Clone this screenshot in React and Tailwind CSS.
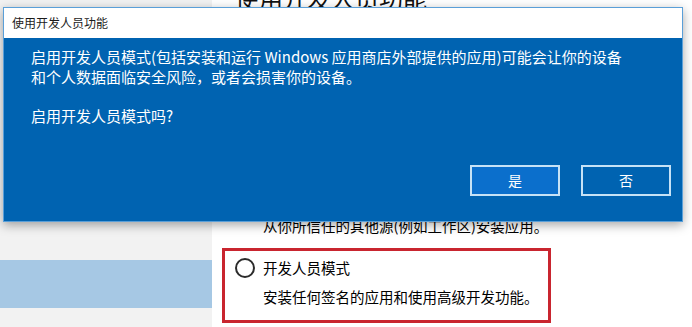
import React from "react";

const font = { fontFamily: '"Noto Sans CJK SC", "Noto Sans", sans-serif' };

function Radio() {
  return (
    <span className="w-[20px] h-[20px] rounded-full border-2 border-[#2b2b2b] shrink-0" />
  );
}

function Option({ label, desc, className = "" }) {
  return (
    <div className={className}>
      <div className="flex items-center gap-[8px] h-[20px]">
        <Radio />
        <span className="text-[14.5px] leading-[20px]">{label}</span>
      </div>
      <p className="mt-[9px] pl-[28px] text-[14.5px] leading-[20px]">{desc}</p>
    </div>
  );
}

function DevDialog() {
  return (
    <div className="absolute left-[3px] top-[7px] w-[680px] h-[215px] flex flex-col border border-[#5a9fd8] shadow-[0_3px_10px_rgba(0,0,0,0.35)]">
      <div className="h-[30px] bg-white flex items-center pl-[8px] text-[12px] text-[#1b1b1b]">
        使用开发人员功能
      </div>
      <div className="flex-1 bg-[#0063b1] text-white flex flex-col pl-[27px] pr-[11px] pt-[9px] pb-[25px]">
        <p className="text-[15px] leading-[20px]">
          启用开发人员模式(包括安装和运行 Windows 应用商店外部提供的应用)可能会让你的设备
          <br />
          和个人数据面临安全风险，或者会损害你的设备。
        </p>
        <p className="mt-[19px] text-[15px] leading-[20px]">启用开发人员模式吗?</p>
        <div className="mt-auto flex justify-end gap-[21px]">
          <button className="w-[90px] h-[31px] border-2 border-[#c6e2f6] bg-[#0b6fcc] text-[14px] text-white">
            是
          </button>
          <button className="w-[90px] h-[31px] border-2 border-[#c6e2f6] bg-[#0063b1] text-[14px] text-white">
            否
          </button>
        </div>
      </div>
    </div>
  );
}

export default function App() {
  return (
    <div className="relative w-[692px] h-[327px] overflow-hidden bg-white flex text-black" style={font}>
      {/* settings nav */}
      <aside className="w-[212px] bg-[#f2f2f2] flex flex-col">
        <div className="h-[260px]" />
        <div className="h-[48px] bg-[#a6c8e4]" />
      </aside>

      {/* settings page */}
      <main className="flex-1 pl-[23px] flex flex-col">
        <h1 className="-mt-[18px] text-[24px] leading-[32px] text-[#111]">使用开发人员功能</h1>
        <p className="mt-[4px] text-[14.5px] leading-[20px]">这些设置仅用于开发目的。</p>
        <p className="text-[14.5px] leading-[20px] text-[#0063b1]">了解详细信息</p>
        <Option
          className="mt-[51px]"
          label="Microsoft Store 应用"
          desc="仅安装来自 Microsoft Store 的应用。"
        />
        <Option
          className="mt-[29px]"
          label="旁加载应用"
          desc="从你所信任的其他源(例如工作区)安装应用。"
        />
        <div className="mt-[12px] -ml-[13px] w-[329px] border-[3px] border-[#c9252f] pl-[10px] pt-[7px] pb-[13px]">
          <div className="flex items-center gap-[8px] h-[20px]">
            <Radio />
            <span className="text-[14.5px] leading-[20px]">开发人员模式</span>
          </div>
          <p className="mt-[9px] pl-[28px] text-[14.5px] leading-[20px]">安装任何签名的应用和使用高级开发功能。</p>
        </div>
      </main>

      <DevDialog />
    </div>
  );
}
